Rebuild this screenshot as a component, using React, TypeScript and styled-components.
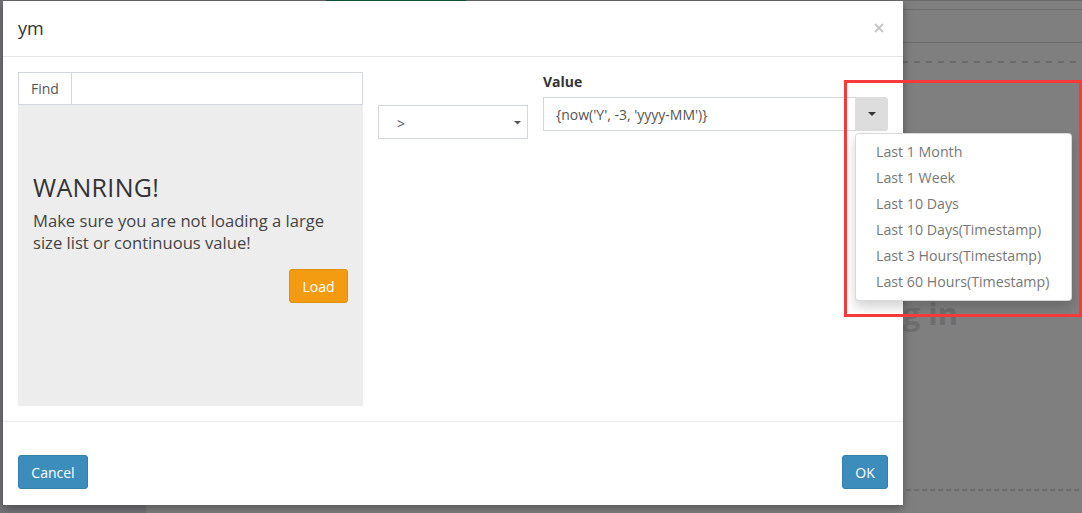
import React from 'react';
import styled, { createGlobalStyle } from 'styled-components';

const GlobalStyle = createGlobalStyle`
  html, body {
    margin: 0;
    padding: 0;
    background: #7f7f7f;
  }
  * {
    box-sizing: border-box;
  }
`;

const Page = styled.div`
  position: relative;
  width: 1082px;
  height: 513px;
  overflow: hidden;
  background: #7f7f7f;
  font-family: 'Open Sans', 'Noto Sans', sans-serif;
  display: flex;
  flex-direction: column;
`;

const TopRule = styled.div`
  height: 1px;
  background: #6a6a6a;
  display: flex;
`;

const GreenTab = styled.div`
  margin-left: 326px;
  width: 140px;
  height: 1px;
  background: #0b5a36;
`;

const Backdrop = styled.div`
  flex: 1;
  display: flex;
`;

const Sidebar = styled.div`
  width: 146px;
  background: #737378;
`;

const Main = styled.div`
  flex: 1;
  display: flex;
  flex-direction: column;
`;

const SolidLine = styled.div<{ $top: number }>`
  margin-top: ${p => p.$top}px;
  height: 1px;
  background: #6c6c6c;
`;

const DashedLine = styled.div<{ $top: number; $thick: number; $dash: number; $gap: number }>`
  margin-top: ${p => p.$top}px;
  height: ${p => p.$thick}px;
  background: repeating-linear-gradient(
    to right,
    #6b6b6b 0,
    #6b6b6b ${p => p.$dash}px,
    transparent ${p => p.$dash}px,
    transparent ${p => p.$dash + p.$gap}px
  );
`;

const BackHeading = styled.div`
  margin-top: 232px;
  padding-left: 720px;
  font-size: 31px;
  font-weight: 700;
  color: #6e6e6e;
  line-height: 36px;
  height: 36px;
`;

const Modal = styled.div`
  position: absolute;
  left: 3px;
  top: 1px;
  width: 900px;
  height: 504px;
  background: #fff;
  box-shadow: 0 3px 9px rgba(0, 0, 0, 0.35);
  display: flex;
  flex-direction: column;
  color: #333;
`;

const Header = styled.div`
  height: 56px;
  padding: 0 15px;
  border-bottom: 1px solid #e5e5e5;
  display: flex;
  align-items: center;
  justify-content: space-between;
`;

const Title = styled.div`
  font-size: 18px;
  color: #333;
  margin-top: -1px;
`;

const Close = styled.button`
  border: 0;
  background: none;
  padding: 0;
  width: 12px;
  height: 12px;
  margin-right: 3px;
  margin-top: -2px;
  display: flex;
  align-items: center;
  justify-content: center;
`;

const Body = styled.div`
  padding: 15px 15px 15px;
  display: grid;
  grid-template-columns: 345px 150px 345px;
  column-gap: 15px;
  border-bottom: 1px solid #ececec;
`;

const LeftCol = styled.div`
  display: flex;
  flex-direction: column;
`;

const FindGroup = styled.div`
  display: flex;
  height: 33px;
  border: 1px solid #d2d6de;
`;

const FindAddon = styled.div`
  width: 53px;
  border-right: 1px solid #d2d6de;
  font-size: 14px;
  color: #555;
  display: flex;
  align-items: center;
  padding-left: 12px;
`;

const FindInput = styled.div`
  flex: 1;
`;

const WarnPanel = styled.div`
  height: 301px;
  background: #ededed;
  padding: 66px 15px 0;
  display: flex;
  flex-direction: column;
`;

const WarnTitle = styled.div`
  font-size: 25px;
  line-height: 32px;
  color: #333;
  letter-spacing: 0.3px;
`;

const WarnText = styled.div`
  margin-top: 7px;
  font-size: 16.6px;
  line-height: 22px;
  color: #444;
`;

const LoadRow = styled.div`
  margin-top: 15px;
  display: flex;
  justify-content: flex-end;
`;

const Button = styled.button<{ $tone: 'orange' | 'blue'; $width: number }>`
  width: ${p => p.$width}px;
  height: 34px;
  border-radius: 3px;
  font-family: 'Open Sans', 'Noto Sans', sans-serif;
  font-size: 14px;
  color: #fff;
  padding: 0;
  background: ${p => (p.$tone === 'orange' ? '#f39c12' : '#3c8dbc')};
  border: 1px solid ${p => (p.$tone === 'orange' ? '#e08e0b' : '#367fa9')};
`;

const MidCol = styled.div`
  padding-top: 33px;
`;

const Select = styled.div`
  height: 34px;
  border: 1px solid #d2d6de;
  display: flex;
  align-items: center;
  justify-content: space-between;
  padding: 2px 6px 0 18px;
  font-size: 14px;
  color: #555;
`;

const RightCol = styled.div`
  display: flex;
  flex-direction: column;
`;

const Label = styled.div`
  font-size: 14px;
  font-weight: 700;
  color: #333;
  line-height: 20px;
  margin-bottom: 5px;
`;

const InputGroup = styled.div`
  position: relative;
  display: flex;
  height: 34px;
`;

const ValueInput = styled.div`
  flex: 1;
  border: 1px solid #d2d6de;
  border-right: 0;
  font-size: 14px;
  color: #555;
  display: flex;
  align-items: center;
  padding-left: 12px;
`;

const CaretButton = styled.div`
  width: 33px;
  background: #dddddd;
  border-radius: 0 3px 3px 0;
  display: flex;
  align-items: center;
  justify-content: center;
`;

const Menu = styled.ul`
  position: absolute;
  left: 312px;
  top: 36px;
  width: 217px;
  margin: 0;
  padding: 5px 0;
  list-style: none;
  background: #fff;
  border: 1px solid rgba(0, 0, 0, 0.15);
  border-radius: 4px;
  box-shadow: 0 6px 12px rgba(0, 0, 0, 0.175);
  z-index: 5;
`;

const MenuItem = styled.li`
  height: 26px;
  line-height: 26px;
  padding-left: 20px;
  font-size: 14.2px;
  color: #777;
  white-space: nowrap;
`;

const Footer = styled.div`
  flex: 1;
  padding: 0 15px 16px;
  display: flex;
  align-items: flex-end;
  justify-content: space-between;
`;

const Annotation = styled.div`
  position: absolute;
  left: 844px;
  top: 80px;
  width: 238px;
  height: 237px;
  border: 3px solid #f53a3a;
  pointer-events: none;
  z-index: 10;
`;

const Triangle = ({ size = 8, color = '#333' }: { size?: number; color?: string }) => (
  <svg width={size} height={size / 2} viewBox="0 0 8 4">
    <path d="M0 0 L8 0 L4 4 Z" fill={color} />
  </svg>
);

const menuItems = [
  'Last 1 Month',
  'Last 1 Week',
  'Last 10 Days',
  'Last 10 Days(Timestamp)',
  'Last 3 Hours(Timestamp)',
  'Last 60 Hours(Timestamp)',
];

export default function App() {
  return (
    <>
      <GlobalStyle />
      <Page>
        <TopRule>
          <GreenTab />
        </TopRule>
        <Backdrop>
          <Sidebar />
          <Main>
            <SolidLine $top={8} />
            <SolidLine $top={32} />
            <DashedLine $top={18} $thick={2} $dash={6} $gap={6} />
            <BackHeading>Log in</BackHeading>
            <DashedLine $top={158} $thick={2} $dash={5} $gap={3} />
          </Main>
        </Backdrop>

        <Modal>
          <Header>
            <Title>ym</Title>
            <Close aria-label="close">
              <svg width="10" height="10" viewBox="0 0 10 10">
                <path d="M1 1 L9 9 M9 1 L1 9" stroke="#c6c6c6" strokeWidth="2" />
              </svg>
            </Close>
          </Header>

          <Body>
            <LeftCol>
              <FindGroup>
                <FindAddon>Find</FindAddon>
                <FindInput />
              </FindGroup>
              <WarnPanel>
                <WarnTitle>WANRING!</WarnTitle>
                <WarnText>
                  Make sure you are not loading a large size list or continuous value!
                </WarnText>
                <LoadRow>
                  <Button $tone="orange" $width={59}>Load</Button>
                </LoadRow>
              </WarnPanel>
            </LeftCol>

            <MidCol>
              <Select>
                <span>&gt;</span>
                <Triangle size={7} color="#555" />
              </Select>
            </MidCol>

            <RightCol>
              <Label>Value</Label>
              <InputGroup>
                <ValueInput>{"{now('Y', -3, 'yyyy-MM')}"}</ValueInput>
                <CaretButton>
                  <Triangle size={8} color="#333" />
                </CaretButton>
                <Menu>
                  {menuItems.map(item => (
                    <MenuItem key={item}>{item}</MenuItem>
                  ))}
                </Menu>
              </InputGroup>
            </RightCol>
          </Body>

          <Footer>
            <Button $tone="blue" $width={70}>Cancel</Button>
            <Button $tone="blue" $width={46}>OK</Button>
          </Footer>
        </Modal>

        <Annotation />
      </Page>
    </>
  );
}
